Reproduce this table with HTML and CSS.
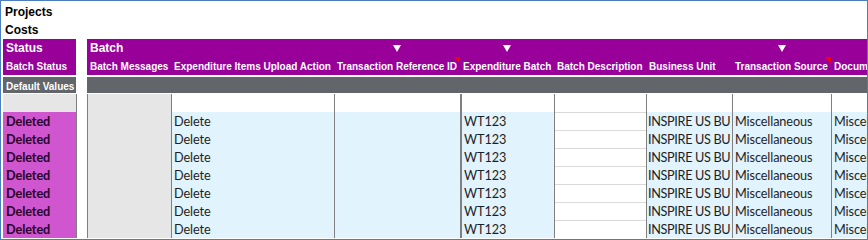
FILE: index.html
```html
<!DOCTYPE html>
<html>
<head>
<meta charset="utf-8">
<link rel="stylesheet" href="styles.css">
</head>
<body>
<div class="frame">
  <div class="title">Projects</div>
  <div class="title">Costs</div>

  <div class="row hdr1">
    <div class="c p big">Status</div>
    <div class="c gap"></div>
    <div class="c p big">Batch</div>
    <div class="c p"></div>
    <div class="c p tri"><svg width="8" height="7" viewBox="0 0 8 7"><polygon points="0,0 8,0 4,7" fill="#fff"/></svg></div>
    <div class="c p tri"><svg width="8" height="7" viewBox="0 0 8 7"><polygon points="0,0 8,0 4,7" fill="#fff"/></svg></div>
    <div class="c p"></div>
    <div class="c p"></div>
    <div class="c p tri"><svg width="8" height="7" viewBox="0 0 8 7"><polygon points="0,0 8,0 4,7" fill="#fff"/></svg></div>
    <div class="c p"></div>
  </div>

  <div class="row hdr2">
    <div class="c p">Batch Status</div>
    <div class="c gap"></div>
    <div class="c p">Batch Messages</div>
    <div class="c p">Expenditure Items Upload Action</div>
    <div class="c p note">Transaction Reference ID</div>
    <div class="c p">Expenditure Batch</div>
    <div class="c p">Batch Description</div>
    <div class="c p">Business Unit</div>
    <div class="c p note">Transaction Source</div>
    <div class="c p">Document</div>
  </div>

  <div class="row defaults">
    <div class="c g">Default Values</div>
    <div class="c gap"></div>
    <div class="c g"></div>
    <div class="c g"></div>
    <div class="c g"></div>
    <div class="c g"></div>
    <div class="c g"></div>
    <div class="c g"></div>
    <div class="c g"></div>
    <div class="c g"></div>
  </div>

  <div class="row body blank">
    <div class="c lg"></div>
    <div class="c ln"></div>
    <div class="c ln lg"></div>
    <div class="c ln"></div>
    <div class="c ln"></div>
    <div class="c ln thick"></div>
    <div class="c ln"></div>
    <div class="c ln"></div>
    <div class="c ln"></div>
    <div class="c ln"></div>
  </div>

  <div class="row body data">
    <div class="c del">Deleted</div><div class="c ln"></div><div class="c ln lg"></div>
    <div class="c ln bl">Delete</div><div class="c ln bl"></div><div class="c ln thick bl">WT123</div>
    <div class="c ln grid"></div><div class="c ln bl caps">INSPIRE US BU</div><div class="c ln bl">Miscellaneous</div><div class="c ln bl">Miscellaneous</div>
  </div>
  <div class="row body data">
    <div class="c del">Deleted</div><div class="c ln"></div><div class="c ln lg"></div>
    <div class="c ln bl">Delete</div><div class="c ln bl"></div><div class="c ln thick bl">WT123</div>
    <div class="c ln grid"></div><div class="c ln bl caps">INSPIRE US BU</div><div class="c ln bl">Miscellaneous</div><div class="c ln bl">Miscellaneous</div>
  </div>
  <div class="row body data">
    <div class="c del">Deleted</div><div class="c ln"></div><div class="c ln lg"></div>
    <div class="c ln bl">Delete</div><div class="c ln bl"></div><div class="c ln thick bl">WT123</div>
    <div class="c ln grid"></div><div class="c ln bl caps">INSPIRE US BU</div><div class="c ln bl">Miscellaneous</div><div class="c ln bl">Miscellaneous</div>
  </div>
  <div class="row body data">
    <div class="c del">Deleted</div><div class="c ln"></div><div class="c ln lg"></div>
    <div class="c ln bl">Delete</div><div class="c ln bl"></div><div class="c ln thick bl">WT123</div>
    <div class="c ln grid"></div><div class="c ln bl caps">INSPIRE US BU</div><div class="c ln bl">Miscellaneous</div><div class="c ln bl">Miscellaneous</div>
  </div>
  <div class="row body data">
    <div class="c del">Deleted</div><div class="c ln"></div><div class="c ln lg"></div>
    <div class="c ln bl">Delete</div><div class="c ln bl"></div><div class="c ln thick bl">WT123</div>
    <div class="c ln grid"></div><div class="c ln bl caps">INSPIRE US BU</div><div class="c ln bl">Miscellaneous</div><div class="c ln bl">Miscellaneous</div>
  </div>
  <div class="row body data">
    <div class="c del">Deleted</div><div class="c ln"></div><div class="c ln lg"></div>
    <div class="c ln bl">Delete</div><div class="c ln bl"></div><div class="c ln thick bl">WT123</div>
    <div class="c ln grid"></div><div class="c ln bl caps">INSPIRE US BU</div><div class="c ln bl">Miscellaneous</div><div class="c ln bl">Miscellaneous</div>
  </div>
  <div class="row body data">
    <div class="c del">Deleted</div><div class="c ln"></div><div class="c ln lg"></div>
    <div class="c ln bl">Delete</div><div class="c ln bl"></div><div class="c ln thick bl">WT123</div>
    <div class="c ln grid"></div><div class="c ln bl caps">INSPIRE US BU</div><div class="c ln bl">Miscellaneous</div><div class="c ln bl">Miscellaneous</div>
  </div>
</div>
</body>
</html>
```

FILE: styles.css
```css
* { box-sizing: border-box; }
html, body { margin: 0; padding: 0; background: #fff; }

.frame {
  width: 868px;
  height: 240px;
  border: 1px solid #4a7ebf;
  padding: 2px 0 0 2px;
  overflow: hidden;
  font-family: "Liberation Sans", Arial, sans-serif;
  background: #fff;
}

.title {
  height: 18px;
  padding: 1px 0 0 2px;
  line-height: 17px;
  font-size: 12px;
  font-weight: bold;
  color: #000;
}

.row {
  display: grid;
  grid-template-columns: 73px 11px 84px 163px 126px 94px 92px 86px 99px 40px;
}

.c {
  overflow: hidden;
  white-space: nowrap;
  min-width: 0;
}

.p { background: #990099; color: #fff; font-weight: bold; }
.gap { background: #fff; }

.hdr1 .c { height: 18px; }
.hdr1 .big {
  font-size: 12px;
  padding: 1px 0 0 3px;
  line-height: 17px;
}
.tri {
  display: flex;
  justify-content: center;
  align-items: flex-start;
  padding-top: 6px;
}
.tri svg { display: block; }

.hdr2 .c {
  height: 18px;
  font-size: 10px;
  padding: 2px 0 0 3px;
  line-height: 16px;
}
.note { position: relative; }
.note::after {
  content: "";
  position: absolute;
  top: 0;
  right: 0;
  border-top: 6px solid #ff0000;
  border-left: 6px solid transparent;
}

.defaults { margin-top: 2px; }
.defaults .c {
  height: 16px;
  font-size: 10px;
  font-weight: bold;
  color: #fff;
  padding: 3px 0 0 3px;
  line-height: 13px;
}
.g { background: #62666a; }

.blank { margin-top: 1px; }
.body .c { height: 18px; }

.ln { border-left: 1px solid #808080; }
.thick { border-left: 2px solid #808080; }
.lg { background: #e6e6e6; }
.bl { background: #e1f3fd; }
.grid { background: #fff; box-shadow: inset 0 1px 0 #d9d9d9; }

.data .c {
  font-family: "Lato", "Carlito", sans-serif;
  font-size: 12.7px;
  letter-spacing: -0.1px;
  line-height: 17px;
  padding: 1px 0 0 2px;
  color: #1e1e1e;
}
.data .caps { letter-spacing: -0.35px; padding-left: 1px; }
.data .del {
  background: #cf56cf;
  color: #2a002a;
  font-weight: bold;
  padding-left: 3px;
}
```
